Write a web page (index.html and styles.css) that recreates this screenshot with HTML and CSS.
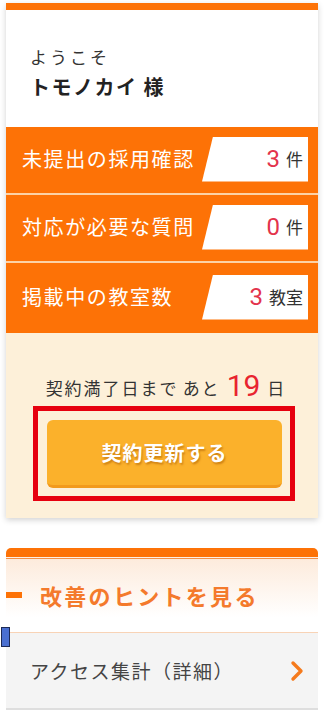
FILE: index.html
```html
<!DOCTYPE html>
<html lang="ja">
<head>
<meta charset="utf-8">
<link rel="stylesheet" href="styles.css">
</head>
<body>
<div class="page">
  <section class="card">
    <div class="welcome">
      <div class="hello">ようこそ</div>
      <div class="name">トモノカイ 様</div>
    </div>
    <div class="stat">
      <span class="label">未提出の採用確認</span>
      <span class="box"><span class="num">3</span><span class="unit">件</span></span>
    </div>
    <div class="stat">
      <span class="label">対応が必要な質問</span>
      <span class="box"><span class="num">0</span><span class="unit">件</span></span>
    </div>
    <div class="stat stat-last">
      <span class="label">掲載中の教室数</span>
      <span class="box"><span class="num">3</span><span class="unit">教室</span></span>
    </div>
    <div class="contract">
      <div class="remain">契約満了日まで<span class="ato">あと</span><span class="days">19</span><span class="day">日</span></div>
      <div class="highlight">
        <button class="renew">契約更新する</button>
      </div>
    </div>
  </section>

  <section class="hints">
    <div class="hints-top"></div>
    <div class="hints-head">
      <span class="dash"></span>
      <span class="hints-title">改善のヒントを見る</span>
    </div>
    <div class="hint-row">
      <span class="hint-text">アクセス集計（詳細）</span>
      <svg class="chev" width="14" height="22" viewBox="0 0 14 22"><path d="M3 3 L11 11 L3 19" fill="none" stroke="#f57a1c" stroke-width="3.4" stroke-linecap="round" stroke-linejoin="round"/></svg>
    </div>
    <span class="marker"></span>
  </section>
</div>
</body>
</html>
```
FILE: styles.css
```css
* { box-sizing: border-box; }
html, body { margin: 0; padding: 0; background: #fff; }
body {
  font-family: "Noto Sans CJK JP", "Noto Sans", sans-serif;
  color: #333;
}
.page { padding: 3px 6px 0; }

.card {
  border-top: 7px solid #fd7206;
  background: #fff;
  box-shadow: 0 2px 6px rgba(0,0,0,0.18);
}
.welcome {
  height: 117px;
  padding: 36px 0 0 24px;
}
.hello {
  font-size: 17px;
  line-height: 22px;
  letter-spacing: 3px;
  color: #333;
}
.name {
  font-size: 20px;
  line-height: 26px;
  font-weight: bold;
  letter-spacing: 1.5px;
  color: #222;
  margin-top: 6px;
}

.stat {
  height: 68px;
  background: #fd7206;
  display: flex;
  align-items: center;
  justify-content: space-between;
  padding: 0 10px 0 16px;
  border-bottom: 2px solid #fcd2a6;
}
.stat-last { border-bottom: none; height: 70px; }
.label {
  color: #fff;
  font-size: 20px;
  letter-spacing: 1.6px;
  line-height: 28px;
  margin-top: -2px;
}
.box {
  width: 106px;
  height: 45px;
  background: #fff;
  clip-path: polygon(11px 0, 100% 0, 100% 100%, 0 100%);
  display: flex;
  align-items: center;
  justify-content: flex-end;
  padding-right: 5px;
  gap: 6px;
  margin-top: -2px;
}
.num {
  color: #e3334b;
  font-size: 24px;
  line-height: 28px;
  font-family: "Roboto", "Noto Sans", sans-serif;
}
.unit {
  color: #333;
  font-size: 17px;
  line-height: 24px;
}

.contract {
  background: #fdf0d9;
  padding: 38px 0 17px;
}
.remain {
  text-align: center;
  font-size: 17px;
  letter-spacing: 2px;
  color: #333;
  height: 30px;
  line-height: 30px;
  margin-bottom: 5px;
  margin-left: 8px;
}
.ato { margin-left: 4px; }
.days {
  color: #e8232f;
  font-size: 30px;
  font-family: "Roboto", "Noto Sans", sans-serif;
  letter-spacing: 0;
  margin: 0 7px 0 6px;
  vertical-align: -1px;
}
.highlight {
  width: 262px;
  margin: 0 auto 0 27px;
  border: 5px solid #e6000f;
  padding: 9px 8px 8px 9px;
}
.renew {
  display: block;
  width: 100%;
  height: 68px;
  border: none;
  border-bottom: 3px solid #f29a1c;
  border-radius: 6px;
  background: #fbb12b;
  color: #fff;
  font-family: "Noto Sans CJK JP", sans-serif;
  font-weight: bold;
  font-size: 20px;
  letter-spacing: 1px;
  text-shadow: 1px 2px 2px rgba(170,90,0,0.55);
  padding: 0;
}

.hints {
  margin-top: 30px;
  position: relative;
}
.hints-top {
  height: 11px;
  border-top: 9px solid #fd7206;
  border-bottom: 1px solid #f29048;
  border-radius: 5px 5px 0 0;
  background: #fdf0e6;
}
.hints-head {
  height: 74px;
  background: linear-gradient(#fdebdc, #fff 80%);
  border-bottom: 1px solid #f8d3b6;
  display: flex;
  align-items: center;
  gap: 18px;
  padding-bottom: 2px;
}
.dash {
  width: 16px;
  height: 6px;
  background: #fd7206;
}
.hints-title {
  color: #f47a2c;
  font-weight: bold;
  font-size: 22px;
  letter-spacing: 2.3px;
}
.hint-row {
  height: 77px;
  background: #f4f4f4;
  border-bottom: 2px solid #dedede;
  display: flex;
  align-items: center;
  justify-content: space-between;
  padding: 0 14px 0 24px;
}
.hint-text {
  font-size: 19px;
  letter-spacing: 1.5px;
  color: #444;
}
.marker {
  position: absolute;
  left: -5px;
  top: 79px;
  width: 9px;
  height: 20px;
  background: #4a6fd0;
  border: 1px solid #1d2a55;
}
```
